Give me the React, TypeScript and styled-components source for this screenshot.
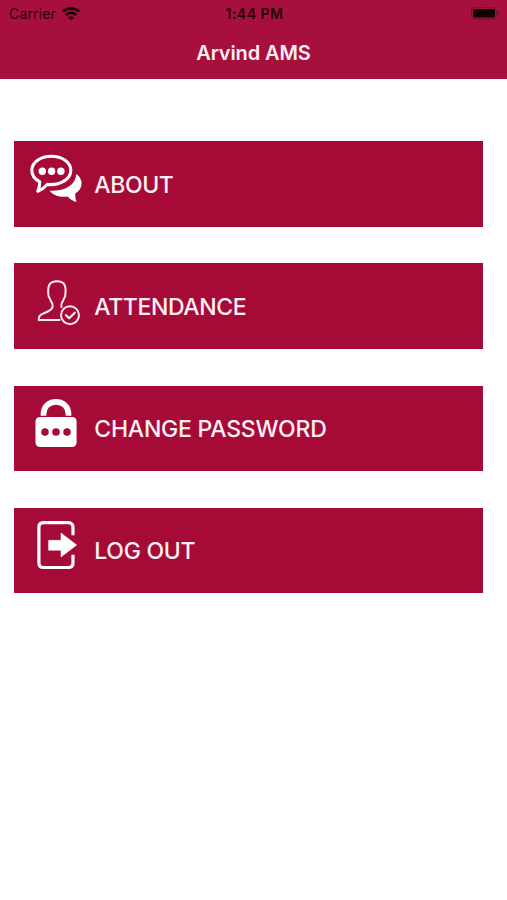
import React from 'react';
import styled, { createGlobalStyle } from 'styled-components';

const CRIMSON = '#a60b38';

const GlobalStyle = createGlobalStyle`
  *, *::before, *::after { box-sizing: border-box; }
  html, body { margin: 0; padding: 0; background: #fff; }
  body { font-family: Inter, 'Liberation Sans', sans-serif; overflow: hidden; }
`;

const Screen = styled.div`
  width: 507px;
  height: 900px;
  background: #fff;
`;

const Header = styled.header`
  height: 79px;
  background: #a7103c;
`;

const StatusBar = styled.div`
  display: grid;
  grid-template-columns: 1fr auto 1fr;
  align-items: center;
  height: 27px;
  padding: 0 6px 0 9px;
  color: #25000b;
  font-size: 14px;
  line-height: 27px;
`;

const Carrier = styled.div`
  display: flex;
  align-items: center;
  gap: 6px;
  letter-spacing: 0.15px;
`;

const Clock = styled.div`
  padding-right: 1px;
  font-size: 14px;
  font-weight: 600;
  letter-spacing: 0.5px;
`;

const Battery = styled.div`
  display: flex;
  justify-content: flex-end;
`;

const Title = styled.h1`
  margin: 0;
  height: 52px;
  line-height: 52px;
  text-align: center;
  color: #fdeff3;
  font-size: 20px;
  font-weight: 600;
  letter-spacing: -0.1px;
`;

const Menu = styled.nav`
  display: flex;
  flex-direction: column;
  gap: 36.9px;
  padding: 62.3px 24.5px 0 14.3px;
`;

const MenuButton = styled.button`
  display: flex;
  align-items: center;
  height: 85.3px;
  padding: 0;
  border: 0;
  background: ${CRIMSON};
  color: #fdeff3;
  text-align: left;
  font-family: inherit;
`;

const MenuIcon = styled.svg`
  flex: none;
  width: 80px;
  height: 85px;
`;

const Label = styled.span<{ $spacing: number }>`
  padding-top: 1.4px;
  font-size: 23px;
  font-weight: 550;
  line-height: 30px;
  letter-spacing: ${(p) => p.$spacing}px;
  white-space: nowrap;
`;

const ChatIcon = () => (
  <MenuIcon viewBox="0 0 80 85" fill="#fff">
    <path d="M62.3 33C69.5 38 69.6 47.5 61.2 52.7C61.1 56 61.5 58.2 62.6 61C59.2 60.4 56 58.6 53.6 55.6C46.5 56.6 39.5 54.8 35.6 49.8C50.5 50.4 61.6 44.5 62.3 33Z" />
    <path
      d="M37.3 15.2C26.5 15.2 17.8 21.3 17.8 29.2C17.8 34 20.8 38.2 25.7 40.7C26 44.4 25 47.3 23.8 50.2C28 48.6 30.9 46.3 33.2 43.4C46.2 44.7 56.8 38.2 56.8 29.2C56.8 21.3 48.1 15.2 37.3 15.2Z"
      fill="none"
      stroke="#fff"
      strokeWidth="3.1"
      strokeLinejoin="round"
    />
    <circle cx="28.3" cy="30.2" r="3.7" />
    <circle cx="37.6" cy="30.2" r="3.7" />
    <circle cx="46.9" cy="30.2" r="3.7" />
  </MenuIcon>
);

const AttendanceIcon = () => (
  <MenuIcon viewBox="0 0 80 85" fill="none" stroke="#fdeaf0" strokeWidth="2" strokeLinecap="round" strokeLinejoin="round">
    <path d="M45.5 55.9H24.7C24.5 52.6 25.8 50.8 28.8 49.7C33 48 37.6 46.4 38.5 43.4C38.9 41.4 38.6 39.4 37.4 37.8C36.6 36.8 36.2 36 36 34.9C35 33.8 34.3 31.6 34.3 29.8C33.6 21.5 35.6 17.2 43 17.2C50.4 17.2 52.2 21.5 51.4 29.8C51.5 31.8 50.9 33.8 49.8 34.9C49.5 36 49.3 36.9 48.3 38C47.3 39.4 47.1 41.2 47.5 43" />
    <circle cx="56" cy="51.2" r="9" />
    <path d="M52 51.2L55.2 54.2L60.8 48.7" strokeWidth="2.2" />
  </MenuIcon>
);

const LockIcon = () => (
  <MenuIcon viewBox="0 0 80 85" fill="#fff">
    <path d="M29.5 29.7V28.2C29.5 20.8 34.8 15.9 42 15.9C49.2 15.9 54.5 20.8 54.5 28.2V29.7" fill="none" stroke="#fff" strokeWidth="5.8" />
    <rect x="21.5" y="31" width="41.1" height="30" rx="4.5" />
    <g fill={CRIMSON}>
      <circle cx="31" cy="46" r="3.8" />
      <circle cx="42" cy="46" r="3.8" />
      <circle cx="53" cy="46" r="3.8" />
    </g>
  </MenuIcon>
);

const LogoutIcon = () => (
  <MenuIcon viewBox="0 0 80 85" fill="#fff">
    <path d="M59 27.3V19.5C59 16.3 57.2 14.7 54.2 14.7H29.6C26.6 14.7 24.9 16.3 24.9 19.5V54.7C24.9 57.9 26.6 59.5 29.6 59.5H54.2C57.2 59.5 59 57.9 59 54.7V46.8" fill="none" stroke="#fff" strokeWidth="3.2" />
    <path d="M34.6 32.3H47V25L62.7 37L47 49V42.3H34.6Z" stroke="#fff" strokeWidth="0.5" strokeLinejoin="round" />
  </MenuIcon>
);

const items = [
  { label: 'ABOUT', Icon: ChatIcon, spacing: -0.4 },
  { label: 'ATTENDANCE', Icon: AttendanceIcon, spacing: -0.4 },
  { label: 'CHANGE PASSWORD', Icon: LockIcon, spacing: -0.24 },
  { label: 'LOG OUT', Icon: LogoutIcon, spacing: -0.3 },
];

export default function App() {
  return (
    <Screen>
      <GlobalStyle />
      <Header>
        <StatusBar>
          <Carrier>
            Carrier
            <svg width="18" height="14" viewBox="0 0 18 14" fill="none" stroke="#25000b" strokeWidth="2.7">
              <path d="M0.9 4.6C5.3 0.3 12.7 0.3 17.1 4.6" />
              <path d="M3.8 7.9C6.7 5.2 11.3 5.2 14.2 7.9" />
              <path d="M9 13.4L6.1 10.4C7.7 8.9 10.3 8.9 11.9 10.4Z" fill="#25000b" stroke="none" />
            </svg>
          </Carrier>
          <Clock>1:44 PM</Clock>
          <Battery>
            <svg width="30" height="13" viewBox="0 0 30 13">
              <rect x="0.5" y="0.5" width="25" height="11.6" rx="3.2" fill="none" stroke="#70102c" />
              <rect x="2" y="2" width="22" height="8.6" rx="1.8" fill="#100004" />
              <path d="M27.2 4.3C29.3 4.8 29.3 7.8 27.2 8.3Z" fill="#70102c" />
            </svg>
          </Battery>
        </StatusBar>
        <Title>Arvind AMS</Title>
      </Header>
      <Menu>
        {items.map(({ label, Icon, spacing }) => (
          <MenuButton key={label} type="button">
            <Icon />
            <Label $spacing={spacing}>{label}</Label>
          </MenuButton>
        ))}
      </Menu>
    </Screen>
  );
}
